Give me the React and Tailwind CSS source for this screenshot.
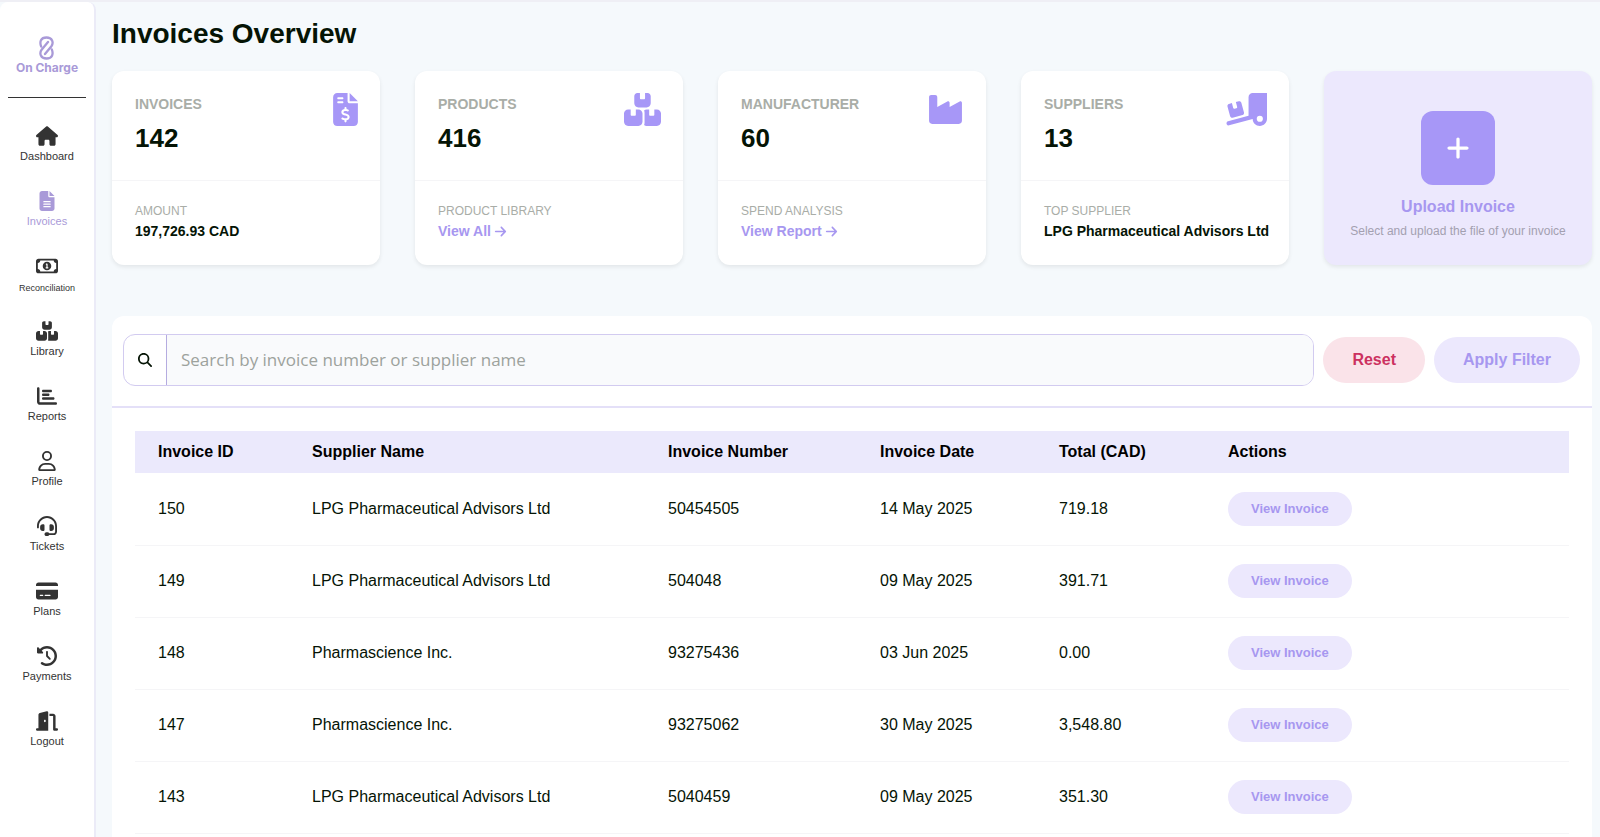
import React, { useState } from "react";
import {
  FaArrowRight,
  FaBoxesStacked,
  FaChartBar,
  FaClockRotateLeft,
  FaCreditCard,
  FaDoorOpen,
  FaFileInvoiceDollar,
  FaFileLines,
  FaHeadset,
  FaHouse,
  FaIndustry,
  FaMagnifyingGlass,
  FaPlus,
  FaRegMoneyBill1,
  FaRegUser,
  FaTruckRampBox,
} from "react-icons/fa6";

const navItems = [
  { label: "Dashboard", icon: FaHouse },
  { label: "Invoices", icon: FaFileLines, active: true },
  { label: "Reconciliation", icon: FaRegMoneyBill1, small: true },
  { label: "Library", icon: FaBoxesStacked },
  { label: "Reports", icon: FaChartBar },
  { label: "Profile", icon: FaRegUser },
  { label: "Tickets", icon: FaHeadset },
  { label: "Plans", icon: FaCreditCard },
  { label: "Payments", icon: FaClockRotateLeft },
  { label: "Logout", icon: FaDoorOpen },
];

const stats = [
  { title: "INVOICES", value: "142", icon: FaFileInvoiceDollar, iconWidth: "w-[25px]", caption: "AMOUNT", detail: "197,726.93 CAD" },
  { title: "PRODUCTS", value: "416", icon: FaBoxesStacked, iconWidth: "w-[37px]", caption: "PRODUCT LIBRARY", link: "View All" },
  { title: "MANUFACTURER", value: "60", icon: FaIndustry, iconWidth: "w-[37px]", caption: "SPEND ANALYSIS", link: "View Report" },
  { title: "SUPPLIERS", value: "13", icon: FaTruckRampBox, iconWidth: "w-[41px]", caption: "TOP SUPPLIER", detail: "LPG Pharmaceutical Advisors Ltd" },
];

const invoices = [
  { id: 150, supplier: "LPG Pharmaceutical Advisors Ltd", number: "50454505", date: "14 May 2025", total: "719.18" },
  { id: 149, supplier: "LPG Pharmaceutical Advisors Ltd", number: "504048", date: "09 May 2025", total: "391.71" },
  { id: 148, supplier: "Pharmascience Inc.", number: "93275436", date: "03 Jun 2025", total: "0.00" },
  { id: 147, supplier: "Pharmascience Inc.", number: "93275062", date: "30 May 2025", total: "3,548.80" },
  { id: 143, supplier: "LPG Pharmaceutical Advisors Ltd", number: "5040459", date: "09 May 2025", total: "351.30" },
];

const Logo = () => (
  <a href="#" className="flex flex-col items-center text-[#a99ad8]">
    <svg viewBox="0 0 15 24" className="h-6 w-[15px]" fill="none" stroke="currentColor" strokeWidth="2.3" strokeLinecap="round">
      <path d="M2.2 10.6 C0.4 6 1.6 1.5 7.5 1.5 C13.4 1.5 14.9 6.8 12.4 10.2 L6 18" />
      <path d="M12.8 13.4 C14.6 18 13.4 22.5 7.5 22.5 C1.6 22.5 0.1 17.2 2.6 13.8 L9 6" />
    </svg>
    <span className="font-['Inter'] text-[12px] leading-4 font-bold">On Charge</span>
  </a>
);

const Sidebar = () => (
  <aside className="w-[96px] shrink-0 rounded-t-lg border-r-2 border-[#ebebf7] bg-white">
    <div className="mx-2 flex h-[96px] flex-col items-center border-b border-[#333] pt-[34px]">
      <Logo />
    </div>
    <nav className="mt-7 flex flex-col">
      {navItems.map(({ label, icon: Icon, active, small }) => (
        <a
          key={label}
          href="#"
          className={`flex h-[65px] flex-col items-center ${active ? "text-[#a99ad8]" : "text-[#333]"}`}
        >
          <Icon className="h-5 w-[22px]" />
          <span className={small ? "mt-1 text-[9px] leading-4" : "mt-[2px] text-[11px] leading-4"}>{label}</span>
        </a>
      ))}
    </nav>
  </aside>
);

const StatCard = ({ title, value, icon: Icon, iconWidth, caption, detail, link }) => (
  <div className="rounded-xl bg-white shadow-[0_2px_4px_rgba(0,0,0,0.08)]">
    <div className="flex h-[110px] items-start justify-between border-b border-[#f5f5f7] pt-[22px] pr-[22px] pl-[23px]">
      <div className="pt-px">
        <h2 className="text-[14px] leading-5 font-bold text-[#a9ada7]">{title}</h2>
        <p className="mt-2 text-[26px] leading-8 font-bold text-[#051405]">{value}</p>
      </div>
      <Icon className={`h-[33px] shrink-0 text-[#a797f7] ${iconWidth}`} />
    </div>
    <div className="px-[23px] pt-[22px] pb-6">
      <p className="text-[12px] leading-4 text-[#a9ada7]">{caption}</p>
      {link ? (
        <a href="#" className="mt-[2px] flex items-center gap-[3px] text-[14px] leading-5 font-bold text-[#a797f0]">
          {link} <FaArrowRight className="size-[13px]" />
        </a>
      ) : (
        <p className="mt-[2px] text-[14px] leading-5 font-bold whitespace-nowrap text-[#051405]">{detail}</p>
      )}
    </div>
  </div>
);

const App = () => {
  const [search, setSearch] = useState("");

  return (
    <div className="flex min-h-screen border-t-2 border-[#efeff5] bg-[#f5f9fc] font-['Liberation_Sans',sans-serif] text-[#051405]">
      <Sidebar />

      <main className="flex min-w-0 flex-1 flex-col pt-3 pr-2 pl-4">
        <h1 className="text-[28px] leading-10 font-bold">Invoices Overview</h1>

        <section className="mt-[17px] grid grid-cols-5 gap-[35px]">
          {stats.map((stat) => (
            <StatCard key={stat.title} {...stat} />
          ))}

          <div className="flex flex-col items-center rounded-xl bg-[#ece8fd] pt-10 shadow-[0_2px_4px_rgba(0,0,0,0.08)]">
            <button
              aria-label="Upload Invoice"
              className="flex size-[74px] items-center justify-center rounded-xl bg-[#a797f7] text-white"
            >
              <FaPlus className="size-[26px]" />
            </button>
            <p className="mt-[10px] text-[16px] leading-6 font-bold text-[#a797f0]">Upload Invoice</p>
            <p className="mt-1 text-[12px] leading-4 text-[#a3a0b0]">Select and upload the file of your invoice</p>
          </div>
        </section>

        <section className="mt-[51px] flex-1 rounded-t-xl bg-white">
          <div className="flex items-center gap-[9px] border-b-2 border-[#e4e0f8] pt-[18px] pr-3 pb-5 pl-[11px]">
            <div className="flex h-[52px] flex-1 overflow-hidden rounded-xl border border-[#d2cbf0]">
              <label htmlFor="search" className="flex w-[43px] items-center justify-center border-r border-[#b5ace0]">
                <FaMagnifyingGlass className="size-[14px]" />
              </label>
              <input
                id="search"
                type="text"
                aria-label="Search invoices"
                value={search}
                onChange={(e) => setSearch(e.target.value)}
                placeholder="Search by invoice number or supplier name"
                className="min-w-0 flex-1 bg-[#f9fafc] px-[14px] font-['Open_Sans'] text-[17px] placeholder-[#9da29d] outline-none"
              />
            </div>
            <button
              onClick={() => setSearch("")}
              className="h-[46px] rounded-full bg-[#fae3e9] px-[29px] text-[16px] font-bold text-[#cc3160]"
            >
              Reset
            </button>
            <button className="h-[46px] rounded-full bg-[#ece8fd] px-[29px] text-[16px] font-bold text-[#a797f0]">
              Apply Filter
            </button>
          </div>

          <div className="px-[23px] pt-[23px]">
            <table className="w-full table-fixed text-left text-[16px]">
              <thead>
                <tr className="h-[42px] bg-[#ebe9fc] text-black">
                  <th className="w-[154px] pl-[23px]">Invoice ID</th>
                  <th className="w-[356px] pl-[23px]">Supplier Name</th>
                  <th className="w-[212px] pl-[23px]">Invoice Number</th>
                  <th className="w-[179px] pl-[23px]">Invoice Date</th>
                  <th className="w-[169px] pl-[23px]">Total (CAD)</th>
                  <th className="pl-[23px]">Actions</th>
                </tr>
              </thead>
              <tbody>
                {invoices.map((invoice) => (
                  <tr key={invoice.id} className="h-[72px] border-b border-[#f5f5f7]">
                    <td className="pl-[23px]">{invoice.id}</td>
                    <td className="pl-[23px]">{invoice.supplier}</td>
                    <td className="pl-[23px]">{invoice.number}</td>
                    <td className="pl-[23px]">{invoice.date}</td>
                    <td className="pl-[23px]">{invoice.total}</td>
                    <td className="pl-[23px]">
                      <button className="h-[34px] rounded-full bg-[#ece8fd] px-[23px] text-[13px] font-bold text-[#a797f0]">
                        View Invoice
                      </button>
                    </td>
                  </tr>
                ))}
              </tbody>
            </table>
          </div>
        </section>
      </main>
    </div>
  );
};

export default App;
